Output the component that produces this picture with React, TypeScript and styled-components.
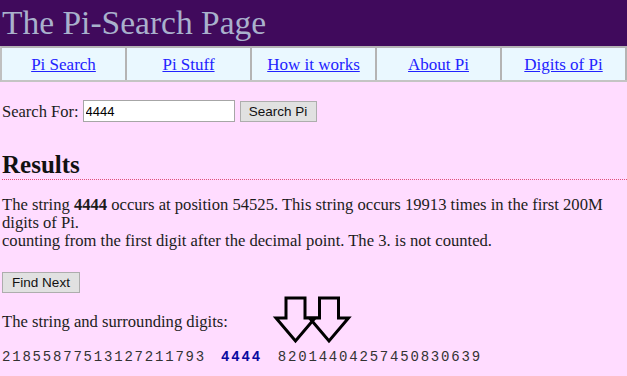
import React from 'react';
import styled, { createGlobalStyle } from 'styled-components';

const GlobalStyle = createGlobalStyle`
  html, body {
    margin: 0;
    padding: 0;
    background: #ffdcff;
    font-family: 'Liberation Serif', 'Times New Roman', serif;
    color: #1c1c1c;
  }
`;

const Page = styled.div`
  width: 627px;
  height: 376px;
  overflow: hidden;
`;

const Header = styled.div`
  height: 46px;
  background: #400a5c;
  padding: 0 2px;
`;

const Title = styled.h1`
  margin: 0;
  font-size: 33.5px;
  line-height: 46px;
  font-weight: normal;
  color: #a9b1cc;
`;

const Nav = styled.nav`
  display: grid;
  grid-template-columns: repeat(5, 1fr);
  height: 36px;
  box-sizing: border-box;
  background: #eaf8ff;
  border-top: 2px solid #b4b4b4;
  border-bottom: 2px solid #c4c4c4;
  border-left: 2px solid #c0c0c0;
`;

const NavCell = styled.div`
  display: flex;
  align-items: center;
  justify-content: center;
  border-right: 2px solid #b4b4b4;
  padding-top: 1px;
`;

const NavLink = styled.a`
  font-size: 17px;
  color: #2222ff;
  text-decoration: underline;
  cursor: pointer;
`;

const Content = styled.div`
  padding: 0 2px;
`;

const SearchRow = styled.form`
  display: flex;
  align-items: center;
  margin-top: 18px;
  height: 22px;
  font-size: 16.5px;
`;

const Label = styled.label`
  margin-right: 4px;
  padding-top: 2px;
`;

const Input = styled.input`
  box-sizing: border-box;
  width: 152px;
  height: 22px;
  margin: 0 5px 0 0;
  padding: 1px 2px;
  border: 1px solid #a6a6a6;
  background: #fff;
  font-family: 'Liberation Sans', Arial, sans-serif;
  font-size: 13px;
  color: #000;
  outline: none;
`;

const Button = styled.button<{ $w: number }>`
  box-sizing: border-box;
  width: ${(p) => p.$w}px;
  height: 21px;
  padding: 0;
  border: 1px solid #adadad;
  background: #e1e1e1;
  font-family: 'Liberation Sans', Arial, sans-serif;
  font-size: 13.5px;
  color: #111;
`;

const ResultsHeading = styled.h2`
  margin: 29px -2px 0 0;
  font-size: 25px;
  line-height: 28px;
  font-weight: bold;
  color: #111;
  border-bottom: 1px dotted #e0507a;
`;

const Para = styled.p<{ $top: number }>`
  margin: ${(p) => p.$top}px 0 0;
  font-size: 16.6px;
  line-height: 18px;
`;

const ButtonRow = styled.div`
  margin-top: 22px;
  height: 21px;
`;

const DigitsBlock = styled.div`
  position: relative;
`;

const Digits = styled.div`
  margin-top: 17px;
  font-family: 'Liberation Mono', 'Courier New', monospace;
  font-size: 14px;
  line-height: 18px;
  letter-spacing: 1.8px;
  white-space: pre;
  color: #333;
`;

const Hit = styled.b`
  margin: 0 16px 0 15px;
  color: #0a0aa0;
`;

const Arrows = styled.svg`
  position: absolute;
  left: 270px;
  top: -19px;
`;

const navItems = ['Pi Search', 'Pi Stuff', 'How it works', 'About Pi', 'Digits of Pi'];

const arrow = (x: number) => {
  const pts = [
    [x - 9.5, 4],
    [x + 9.5, 4],
    [x + 9.5, 24],
    [x + 19.5, 24],
    [x, 47],
    [x - 19.5, 24],
    [x - 9.5, 24],
  ];
  return pts.map((p) => p.join(',')).join(' ');
};

export default function App() {
  return (
    <Page>
      <GlobalStyle />
      <Header>
        <Title>The Pi-Search Page</Title>
      </Header>
      <Nav>
        {navItems.map((n) => (
          <NavCell key={n}>
            <NavLink>{n}</NavLink>
          </NavCell>
        ))}
      </Nav>
      <Content>
        <SearchRow onSubmit={(e) => e.preventDefault()}>
          <Label>Search For:</Label>
          <Input defaultValue="4444" />
          <Button $w={77}>Search Pi</Button>
        </SearchRow>
        <ResultsHeading>Results</ResultsHeading>
        <Para $top={16}>
          The string <b>4444</b> occurs at position 54525. This string occurs 19913 times in the first 200M
          digits of Pi.
          <br />
          counting from the first digit after the decimal point. The 3. is not counted.
        </Para>
        <ButtonRow>
          <Button $w={78}>Find Next</Button>
        </ButtonRow>
        <DigitsBlock>
          <Para $top={20}>The string and surrounding digits:</Para>
          <Arrows width="82" height="52" viewBox="0 0 82 52">
            <polygon points={arrow(23.5)} fill="none" stroke="#000" strokeWidth="3" />
            <polygon points={arrow(57)} fill="none" stroke="#000" strokeWidth="3" />
          </Arrows>
          <Digits>
            21855877513127211793
            <Hit>4444</Hit>
            82014404257450830639
          </Digits>
        </DigitsBlock>
      </Content>
    </Page>
  );
}
